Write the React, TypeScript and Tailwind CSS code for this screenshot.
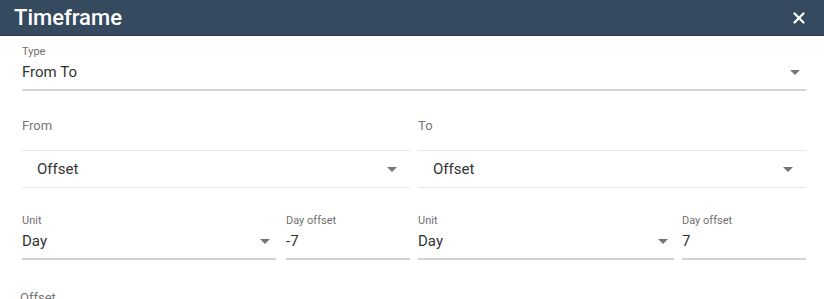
import { X } from 'lucide-react'

function Caret() {
  return (
    <svg width="10" height="5" viewBox="0 0 10 5" className="shrink-0">
      <path d="M0 0 L10 0 L5 5 Z" fill="#757575" />
    </svg>
  )
}

function SelectField({ label, value }: { label: string; value: string }) {
  return (
    <div className="border-b-2 border-[#d2d2d2] pb-[7px]">
      <div className="text-[11px] leading-[13px] text-[#6f6f6f]">{label}</div>
      <div className="mt-[4px] flex items-center justify-between pr-[6px]">
        <span className="text-[15px] leading-[20px] text-[#333]">{value}</span>
        <Caret />
      </div>
    </div>
  )
}

function TextField({ label, value }: { label: string; value: string }) {
  return (
    <div className="border-b-2 border-[#d2d2d2] pb-[7px]">
      <div className="text-[11px] leading-[13px] text-[#6f6f6f]">{label}</div>
      <div className="mt-[4px] text-[15px] leading-[20px] text-[#333]">{value}</div>
    </div>
  )
}

function Side({ title, dayOffset, gap }: { title: string; dayOffset: string; gap: string }) {
  return (
    <div>
      <div className="h-[59px] pt-[27px] text-[13px] leading-[16px] text-[#777]">{title}</div>
      <div className="flex h-[38px] items-center justify-between border-y border-[#e6e6e6] pl-[15px] pr-[13px]">
        <span className="text-[15px] leading-[20px] text-[#333]">Offset</span>
        <Caret />
      </div>
      <div className={`mt-[26px] grid grid-cols-[1fr_124px] ${gap}`}>
        <SelectField label="Unit" value="Day" />
        <TextField label="Day offset" value={dayOffset} />
      </div>
    </div>
  )
}

export default function App() {
  return (
    <div className="h-[299px] w-[824px] overflow-hidden bg-white font-['Roboto',sans-serif]">
      <div className="flex h-9 items-center justify-between border-b border-[#2a3b4d] bg-[#354a5f] pl-[14px] pr-[16px]">
        <h1 className="text-[22px] font-medium leading-none text-white">Timeframe</h1>
        <X className="h-[18px] w-[18px] text-white" strokeWidth={3} />
      </div>
      <div className="pl-[22px] pr-[18px] pt-[9px]">
        <SelectField label="Type" value="From To" />
        <div className="grid grid-cols-2 gap-2">
          <Side title="From" dayOffset="-7" gap="gap-[10px]" />
          <Side title="To" dayOffset="7" gap="gap-[8px]" />
        </div>
        <div className="-ml-[2px] mt-[30px] text-[13px] leading-[16px] text-[#777]">Offset</div>
      </div>
    </div>
  )
}
